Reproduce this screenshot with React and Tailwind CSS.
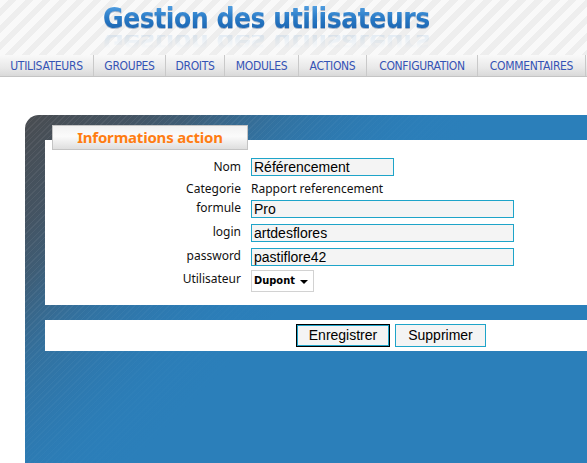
import React from "react";

const menu = [
  { label: "UTILISATEURS", w: "w-[94px]" },
  { label: "GROUPES", w: "w-[72px]" },
  { label: "DROITS", w: "w-[59px]" },
  { label: "MODULES", w: "w-[74px]" },
  { label: "ACTIONS", w: "w-[68px]" },
  { label: "CONFIGURATION", w: "w-[111px]" },
  { label: "COMMENTAIRES", w: "w-[108px]" },
];

const fields = [
  { label: "formule", value: "Pro", mt: "mt-[2px]" },
  { label: "login", value: "artdesflores", mt: "mt-[6px]" },
  { label: "password", value: "pastiflore42", mt: "mt-[6px]" },
];

const labelCls =
  "w-[196px] shrink-0 text-right text-[12px] leading-[15px] text-[#111] font-['Noto_Sans',sans-serif]";
const inputCls =
  "h-[18px] border border-[#1ea4c9] bg-[#f4f4f4] px-[2px] text-[14px] leading-[16px] text-black font-['Liberation_Sans',Arial,sans-serif] outline-none";

export default function App() {
  return (
    <div className="w-[587px] h-[463px] overflow-hidden bg-white">
      {/* Header */}
      <div className="h-[55px] overflow-hidden bg-[#f1f1f1] bg-[repeating-linear-gradient(135deg,#f9f9f9_0_6px,#eeeeee_6px_12px)]">
        <div className="pl-[103px] pt-[3px]">
          <div className="font-['DejaVu_Sans_Condensed','DejaVu_Sans',sans-serif] font-bold text-[28px] leading-[32px] tracking-[-0.5px] bg-[linear-gradient(to_bottom,#5aa6e6_0%,#2a7cc8_45%,#155aa6_100%)] bg-clip-text text-transparent drop-shadow-[0_1px_0_rgba(20,60,120,0.35)] whitespace-nowrap">
            Gestion des utilisateurs
          </div>
          <div className="h-[14px] overflow-hidden opacity-[0.1] [mask-image:linear-gradient(to_bottom,black,transparent)]" aria-hidden="true">
            <div className="h-[14px] -scale-y-100 font-['DejaVu_Sans_Condensed','DejaVu_Sans',sans-serif] font-bold text-[28px] leading-[14px] tracking-[-0.5px] text-[#2a7cc8] whitespace-nowrap">
              Gestion des utilisateurs
            </div>
          </div>
        </div>
      </div>

      {/* Menu */}
      <nav className="flex h-[22px] border-b border-[#c4c4c4] bg-[linear-gradient(to_bottom,#f9f9f9,#e9e9e9_60%,#d9d9d9)]">
        {menu.map((m) => (
          <div
            key={m.label}
            className={`${m.w} shrink-0 flex items-center justify-center border-r border-[#c9c9c9] text-[12px] text-[#3553b5] font-['DejaVu_Sans_Condensed','DejaVu_Sans',sans-serif] tracking-[-0.3px]`}
          >
            {m.label}
          </div>
        ))}
      </nav>

      {/* Panel */}
      <div className="ml-[25px] mt-[38px] h-[348px] rounded-tl-[14px] pl-[20px] pt-[25px] bg-[linear-gradient(135deg,rgba(43,127,186,0)_18%,#2b7fba_50%),repeating-linear-gradient(135deg,rgba(255,255,255,0.06)_0_1px,transparent_1px_4px),linear-gradient(135deg,#494c50_0%,#445463_12%,#366b93_28%,#2d7ab3_45%,#2b7fba_65%)]">
        <div className="bg-white pt-[18px] pb-[13px]">
          <div className="-mt-[33px] mb-[8px] ml-[7px] w-[196px] h-[25px] border border-[#c4c4c4] bg-[linear-gradient(to_bottom,#f2f2f2,#fbfbfb_45%,#dedede)] flex items-center justify-center text-[15px] font-bold text-[#ff7d12] font-['Noto_Sans',sans-serif] tracking-[-0.2px]">
            Informations action
          </div>

          <div className="flex items-start gap-[10px]">
            <div className={`${labelCls} pt-[1px]`}>Nom</div>
            <div className={`${inputCls} w-[143px]`}>Référencement</div>
          </div>

          <div className="flex items-center gap-[10px] h-[20px] mt-[2px]">
            <div className={labelCls}>Categorie</div>
            <div className="text-[12px] leading-[15px] text-[#111] font-['Noto_Sans',sans-serif]">
              Rapport referencement
            </div>
          </div>

          {fields.map((f) => (
            <div key={f.label} className={`flex items-start gap-[10px] ${f.mt}`}>
              <div className={labelCls}>{f.label}</div>
              <div className={`${inputCls} w-[263px]`}>{f.value}</div>
            </div>
          ))}

          <div className="flex items-start gap-[10px] mt-[4px]">
            <div className={`${labelCls} pt-[1px]`}>Utilisateur</div>
            <div className="w-[63px] h-[22px] border border-[#d2d2d2] bg-white flex items-center justify-between pl-[2px] pr-[5px]">
              <span className="text-[11px] font-bold text-black font-['DejaVu_Sans_Condensed','DejaVu_Sans',sans-serif]">
                Dupont
              </span>
              <span className="w-0 h-0 border-l-[4px] border-r-[4px] border-t-[4px] border-l-transparent border-r-transparent border-t-black mt-[2px]" />
            </div>
          </div>
        </div>

        <div className="mt-[15px] h-[31px] bg-white flex items-center pl-[251px] gap-[5px]">
          <button className="w-[94px] h-[23px] border border-black bg-[#f4f4f4] shadow-[inset_0_0_0_1px_#1ea4c9] text-[14px] text-black font-['Liberation_Sans',Arial,sans-serif]">
            Enregistrer
          </button>
          <button className="w-[91px] h-[23px] border border-[#1ea4c9] bg-[#f4f4f4] text-[14px] text-black font-['Liberation_Sans',Arial,sans-serif]">
            Supprimer
          </button>
        </div>
      </div>
    </div>
  );
}
